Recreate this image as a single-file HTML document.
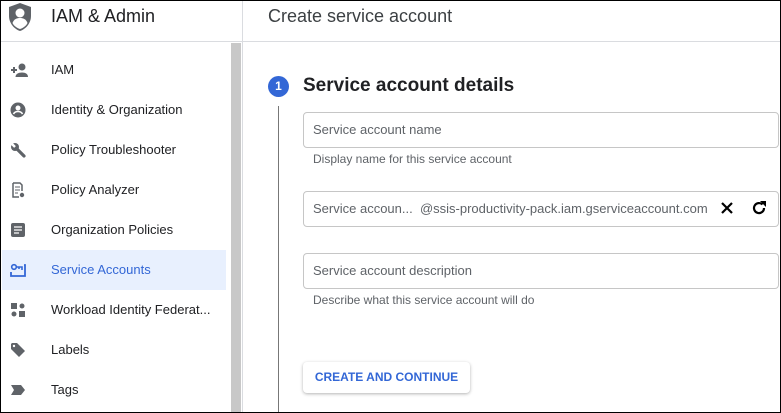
<!DOCTYPE html>
<html><head><meta charset="utf-8"><style>
*{box-sizing:border-box;margin:0;padding:0}
body{width:781px;height:413px;overflow:hidden;background:#fff;font-family:"Liberation Sans",Arial,sans-serif;position:relative;color:#202124}
.a{position:absolute}
.frame{left:0;top:0;width:781px;height:413px;border:1px solid #000;z-index:10;pointer-events:none}
.item{position:absolute;left:2px;width:224px;height:40px;font-size:13px;line-height:40px;padding-left:49px;color:#202124}
.item svg{position:absolute;left:8px;top:12px}
.sel{background:#e8f0fe;color:#3367d6}
.inp{position:absolute;left:303px;width:476px;height:36px;border:1px solid #c6c6c6;border-radius:4px;font-size:13px;line-height:34px;padding-left:9px;color:#5f6368}
.help{position:absolute;left:313px;font-size:12px;color:#5f6368}
</style></head><body>
<div class="a frame"></div>
<svg class="a" style="left:7px;top:2px" width="26" height="30" viewBox="0 0 26 30"><path d="M13 1 L24 5 V14 C24 21 19 27 13 29 C7 27 2 21 2 14 V5 Z" fill="#5f6368"/><circle cx="13" cy="11" r="4.5" fill="#fff"/><path d="M5.5 21 C7 17 10 16 13 16 C16 16 19 17 20.5 21 C19 24 16 26 13 27 C10 26 7 24 5.5 21Z" fill="#fff"/></svg>
<div class="a" style="left:51px;top:6px;font-size:18px;color:#202124">IAM &amp; Admin</div>
<div class="a" style="left:268px;top:6px;font-size:18px;color:#3c4043">Create service account</div>
<div class="a" style="left:0;top:41px;width:781px;height:1px;background:#dadce0"></div>
<div class="a" style="left:242px;top:0;width:1px;height:413px;background:#dadce0"></div>
<div class="a" style="left:231px;top:43px;width:10px;height:370px;background:#c8c8c8"></div>
<div class="item" style="top:50px"><svg width="18" height="16" viewBox="0 0 18 16"><path d="M1 8h6M4 5v6" stroke="#5f6368" stroke-width="2"/><circle cx="12" cy="5" r="3.5" fill="#5f6368"/><path d="M5.5 15c0-3 3-4.5 6.5-4.5s6 1.5 6 4.5z" fill="#5f6368"/></svg>IAM</div>
<div class="item" style="top:90px"><svg width="16" height="16" viewBox="0 0 16 16"><circle cx="8" cy="8" r="7.5" fill="#5f6368"/><circle cx="8" cy="6" r="2.5" fill="#fff"/><path d="M3.5 12c1-2 2.5-2.5 4.5-2.5s3.5.5 4.5 2.5" stroke="#fff" stroke-width="1.6" fill="none"/></svg>Identity &amp; Organization</div>
<div class="item" style="top:130px"><svg width="16" height="16" viewBox="0 0 16 16"><path d="M6 6 L14 14" stroke="#5f6368" stroke-width="3.2" stroke-linecap="round"/><circle cx="5" cy="5" r="4" fill="#5f6368"/><path d="M1 1 L5 5" stroke="#fff" stroke-width="2.5"/></svg>Policy Troubleshooter</div>
<div class="item" style="top:170px"><svg width="16" height="16" viewBox="0 0 16 16"><path d="M3 1h7l2 2v6" stroke="#5f6368" stroke-width="1.5" fill="none"/><path d="M3 1v14h6" stroke="#5f6368" stroke-width="1.5" fill="none"/><path d="M5 5h5M5 8h5M5 11h3" stroke="#5f6368"/><circle cx="12" cy="13" r="2.2" fill="#5f6368"/></svg>Policy Analyzer</div>
<div class="item" style="top:210px"><svg width="16" height="16" viewBox="0 0 16 16"><rect x="1" y="1" width="14" height="14" rx="2" fill="#5f6368"/><path d="M4 5h8M4 8h8M4 11h5" stroke="#fff" stroke-width="1.2"/></svg>Organization Policies</div>
<div class="item sel" style="top:250px"><svg width="16" height="16" viewBox="0 0 16 16"><circle cx="4" cy="5" r="2.3" fill="none" stroke="#3367d6" stroke-width="1.6"/><path d="M6 5h6v3M9 5v2" stroke="#3367d6" stroke-width="1.6" fill="none"/><path d="M1 10v4h14V3h-1" stroke="#3367d6" stroke-width="1.8" fill="none"/></svg>Service Accounts</div>
<div class="item" style="top:290px"><svg width="16" height="16" viewBox="0 0 16 16"><rect x="1" y="1" width="6" height="6" fill="#5f6368"/><circle cx="12" cy="4" r="2.5" fill="#5f6368"/><circle cx="4" cy="12" r="2.5" fill="#5f6368"/><rect x="9" y="9" width="6" height="6" fill="#5f6368"/></svg>Workload Identity Federat...</div>
<div class="item" style="top:330px"><svg width="16" height="16" viewBox="0 0 16 16"><path d="M1 2v5l8 8 6-6-8-8H2z" fill="#5f6368"/><circle cx="4" cy="4" r="1.2" fill="#fff"/></svg>Labels</div>
<div class="item" style="top:370px"><svg width="16" height="16" viewBox="0 0 16 16"><path d="M1 3h10l4 5-4 5H1l3-5z" fill="#5f6368"/></svg>Tags</div>
<div class="a" style="left:268px;top:76px;width:21px;height:21px;border-radius:50%;background:#3367d6;color:#fff;font-size:12px;font-weight:bold;text-align:center;line-height:21px">1</div>
<div class="a" style="left:278px;top:106px;width:1px;height:307px;background:#777"></div>
<div class="a" style="left:303px;top:75px;font-size:19px;font-weight:bold;color:#202124">Service account details</div>
<div class="inp" style="top:112px">Service account name</div>
<div class="help" style="top:152px">Display name for this service account</div>
<div class="inp" style="top:191px">Service accoun...&nbsp;&nbsp;@ssis-productivity-pack.iam.gserviceaccount.com</div>
<svg class="a" style="left:720px;top:201px" width="14" height="14" viewBox="0 0 14 14"><path d="M2 2L12 12M12 2L2 12" stroke="#000" stroke-width="2.2"/></svg>
<svg class="a" style="left:751px;top:200px" width="16" height="16" viewBox="0 0 16 16"><path d="M13 8A5 5 0 1 1 11.5 4.5" stroke="#000" stroke-width="2.2" fill="none"/><path d="M9 1h6v6z" fill="#000"/></svg>
<div class="inp" style="top:253px">Service account description</div>
<div class="help" style="top:293px">Describe what this service account will do</div>
<div class="a" style="left:303px;top:362px;width:167px;height:31px;border-radius:4px;background:#fff;box-shadow:0 1px 3px rgba(0,0,0,.3);color:#3367d6;font-size:12px;font-weight:bold;text-align:center;line-height:31px">CREATE AND CONTINUE</div>
</body></html>
